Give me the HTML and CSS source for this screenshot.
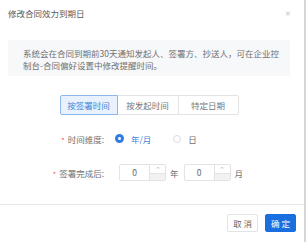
FILE: index.html
```html
<!DOCTYPE html>
<html lang="zh-CN">
<head>
    <meta charset="UTF-8">
    <meta name="viewport" content="width=device-width, initial-scale=1.0">
    <title>修改合同效力到期日</title>
    <link rel="stylesheet" href="styles.css">
</head>
<body>
    <div class="modal">
        <div class="modal-header">
            <span class="modal-title">修改合同效力到期日</span>
            <span class="modal-close">&#x2715;</span>
        </div>
        <div class="modal-body">
            <div class="notice">
                系统会在合同到期前30天通知发起人、签署方、抄送人，可在企业控<br>制台-合同偏好设置中修改提醒时间。
            </div>

            <div class="tabs">
                <div class="tab active">按签署时间</div>
                <div class="tab">按发起时间</div>
                <div class="tab">特定日期</div>
            </div>

            <div class="form-row row-radio">
                <label class="form-label"><span class="req">*</span>时间维度:</label>
                <div class="radio-group">
                    <span class="radio checked"><span class="dot"></span>年/月</span>
                    <span class="radio"><span class="dot"></span>日</span>
                </div>
            </div>

            <div class="form-row row-number">
                <label class="form-label"><span class="req">*</span>签署完成后:</label>
                <div class="number-field">
                    <div class="number">
                        <span class="number-value">0</span>
                        <span class="stepper">
                            <span class="step up">&#x2303;</span>
                            <span class="step down"></span>
                        </span>
                    </div>
                    <span class="unit">年</span>
                    <div class="number">
                        <span class="number-value">0</span>
                        <span class="stepper">
                            <span class="step up">&#x2303;</span>
                            <span class="step down"></span>
                        </span>
                    </div>
                    <span class="unit">月</span>
                </div>
            </div>
        </div>
        <div class="modal-footer">
            <button class="btn">取 消</button>
            <button class="btn btn-primary">确 定</button>
        </div>
    </div>
</body>
</html>
```

FILE: styles.css
```css
/* General */
body {
  margin: 0;
  padding: 0;
  background: #ffffff;
  font-family: 'Noto Sans CJK SC', 'Noto Sans', sans-serif;
  font-size: 8.5px;
  color: #666666;
}

.modal {
  width: 304px;
  height: 242px;
  border-right: 2px solid #d6d6d6;
  display: flex;
  flex-direction: column;
  box-sizing: content-box;
}

/* Header */
.modal-header {
  display: flex;
  justify-content: space-between;
  align-items: center;
  padding: 6px 13px 0 8px;
  height: 13px;
}

.modal-title {
  font-size: 8.5px;
  color: #595959;
  line-height: 12px;
}

.modal-close {
  font-size: 7px;
  color: #c4c4c4;
}

/* Body */
.modal-body {
  flex: 1;
  padding: 21px 14px 0 8px;
}

.notice {
  background-color: #f7f8fa;
  padding: 7px 4px 5px 15px;
  line-height: 12px;
  color: #707070;
  height: 24px;
  white-space: nowrap;
}

/* Tabs */
.tabs {
  display: flex;
  justify-content: center;
  margin-top: 19px;
}

.tab {
  height: 20px;
  line-height: 18px;
  box-sizing: border-box;
  border: 1px solid #e3e3e3;
  margin-left: -1px;
  color: #777777;
  background: #ffffff;
  text-align: center;
  white-space: nowrap;
}

.tab:first-child {
  border-radius: 2px 0 0 2px;
  width: 58px;
  margin-left: 0;
}

.tab:nth-child(2) {
  width: 62px;
}

.tab:last-child {
  border-radius: 0 2px 2px 0;
  width: 61px;
}

.tab.active {
  position: relative;
  background: #e9f2fc;
  border-color: #8db9ea;
  color: #3f86db;
}

/* Form rows */
.form-row {
  display: flex;
  align-items: center;
}

.form-label {
  width: 96px;
  text-align: right;
  color: #707070;
  white-space: nowrap;
}

.req {
  color: #f04b4b;
  margin-right: 3px;
  font-size: 7px;
}

.row-radio {
  margin-top: 15px;
  height: 17px;
}

.radio-group {
  display: flex;
  align-items: center;
  margin-left: 11px;
}

.radio {
  display: flex;
  align-items: center;
  gap: 7px;
  margin-right: 22px;
  color: #707070;
}

.radio .dot {
  width: 8px;
  height: 8px;
  border-radius: 50%;
  border: 1px solid #dcdcdc;
  box-sizing: border-box;
  background: #ffffff;
}

.radio.checked {
  color: #3f86db;
}

.radio.checked .dot {
  border: 3px solid #2f7de1;
  background: #ffffff;
  width: 9px;
  height: 9px;
}

.row-number {
  margin-top: 17px;
  height: 17px;
}

.number-field {
  display: flex;
  align-items: center;
  margin-left: 15px;
}

.number {
  display: flex;
  width: 47px;
  height: 17px;
  border: 1px solid #e3e3e3;
  box-sizing: border-box;
  border-radius: 2px;
}

.number-value {
  flex: 1;
  text-align: center;
  line-height: 15px;
  color: #666666;
}

.stepper {
  width: 15px;
  display: flex;
  flex-direction: column;
  border-left: 1px solid #e3e3e3;
}

.step {
  flex: 1;
  text-align: center;
  font-size: 7px;
  line-height: 8px;
  color: #b8b8b8;
}

.step.down {
  background: #f2f2f2;
  border-top: 1px solid #e3e3e3;
}

.unit {
  margin: 0 5px 0 4px;
  color: #707070;
}

/* Footer */
.modal-footer {
  border-top: 1px solid #e8e8e8;
  display: flex;
  justify-content: flex-end;
  gap: 7px;
  padding: 9px 8px 10px 0;
  margin-top: 20px;
}

.btn {
  height: 18px;
  padding: 0 5px;
  font-family: inherit;
  font-size: 8.5px;
  border: 1px solid #e3e3e3;
  border-radius: 2px;
  background: #ffffff;
  color: #666666;
}

.btn-primary {
  background: #1a6fe0;
  border-color: #1a6fe0;
  color: #ffffff;
}
```
